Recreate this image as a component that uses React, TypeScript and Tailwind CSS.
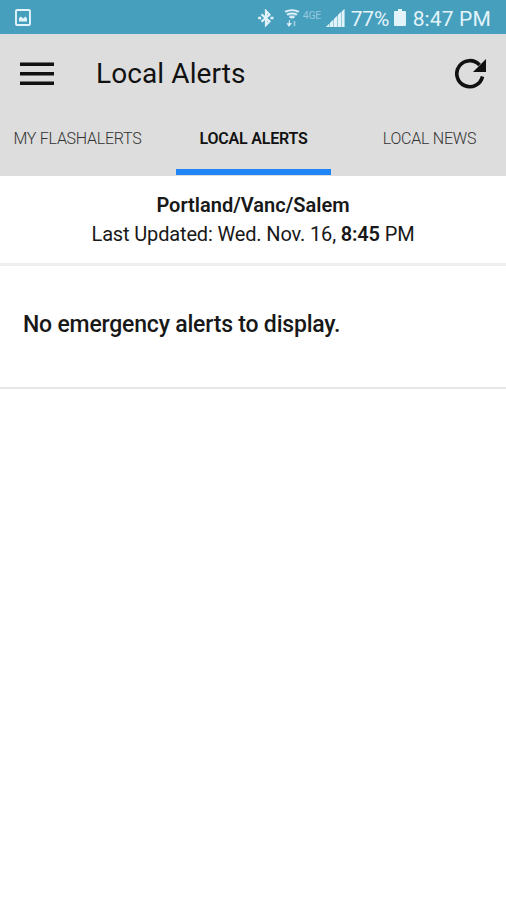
import clsx from 'clsx'

const TABS = [
  { id: 'mine',  label: 'MY FLASHALERTS', tracking: 'tracking-[-0.26px]' },
  { id: 'local', label: 'LOCAL ALERTS',   tracking: 'tracking-[-0.2px]' },
  { id: 'news',  label: 'LOCAL NEWS',     tracking: 'tracking-[-0.24px]' },
]

function StatusBar() {
  return (
    <div className="flex h-[34px] items-center bg-[#479fbe] px-[15px] pt-px text-[#e3f3fa]">
      <svg width="16" height="17" viewBox="0 0 16 17" fill="none">
        <rect x="1" y="1" width="14" height="15" rx="1" stroke="currentColor" strokeWidth="1.9" />
        <path d="M4 12.5V9l2-1.500 2 2 2.5-2 1.500 2v3z" fill="currentColor" />
      </svg>
      <svg width="18" height="18" viewBox="0 0 18 18" className="ml-[226px]" fill="none" stroke="currentColor" strokeWidth="2.2">
        <path d="M4.5 5.2l8 7.2L9 16V2l3.5 3.6-8 7.2" />
        <path d="M1.2 9h3M13.5 9h3" strokeWidth="2.6" />
      </svg>
      <svg width="16" height="18" viewBox="0 0 16 18" className="ml-[9px]" fill="none" stroke="currentColor">
        <path d="M1 2.800q7-3.500 14 0M3 5.800q5-3 10 0M5.500 8.600q2.500-1.600 5 0" strokeWidth="1.8" />
        <path d="M2 3.500L8 11l6-7.500z" fill="currentColor" fillOpacity=".35" stroke="none" />
        <path d="M5.500 11v3.500H7.500L5 17.500 3 14.500H5z" fill="currentColor" strokeWidth=".6" />
        <path d="M10.500 12v5" strokeOpacity=".6" strokeWidth="1.6" />
      </svg>
      <span className="-mt-[3px] ml-[3px] w-[20px] text-[10.5px] leading-none tracking-[-0.3px] whitespace-nowrap text-[#94c8dd]">4GE</span>
      <svg width="19" height="18" viewBox="0 0 19 18" className="ml-[3px]" fill="currentColor">
        <path d="M0 18L18.500 0v18z" fillOpacity=".5" />
        <path d="M0 18l3-3v3zM4 14l3-3v7H4zM8 10l3-3v11H8zM12 6l3-3v15h-3zM16 2.500L18.500 0v18H16z" />
      </svg>
      <span className="mt-[3px] ml-[6px] w-[39px] text-[21px] leading-none tracking-[-0.2px]">77%</span>
      <svg width="12" height="17" viewBox="0 0 12 17" className="ml-[4px]" fill="currentColor">
        <path d="M4 0h4v2h3.200q.8 0 .8.800V16q0 1-1 1H1q-1 0-1-1V2.800Q0 2 .8 2H4z" />
      </svg>
      <span className="mt-[3px] ml-[7px] text-[21px] leading-none tracking-[0.15px] whitespace-nowrap">8:47 PM</span>
    </div>
  )
}

export default function App() {
  return (
    <div className="min-h-[900px] w-[506px] overflow-hidden bg-white font-['Roboto',sans-serif] text-[#181818]">
      <StatusBar />

      <header className="h-[142px] bg-[#dddddd]">
        <div className="flex h-[79px] items-center pr-[19px] pl-5">
          <button aria-label="Menu">
            <svg width="34" height="24" viewBox="0 0 34 24" stroke="#111" strokeWidth="3.6" className="block">
              <path d="M0 2.300h34M0 11.800h34M0 21.200h34" />
            </svg>
          </button>
          <h1 className="ml-[42px] text-[28px] tracking-[0.1px] text-[#111]">Local Alerts</h1>
          <button aria-label="Refresh" className="ml-auto">
            <svg width="32" height="32" viewBox="0 0 32 32" fill="none">
              <path d="M27.500 18.500A13 13 0 1 1 24.500 7" stroke="#111" strokeWidth="3.600" />
              <path d="M31 1v13H18z" fill="#111" />
            </svg>
          </button>
        </div>

        <nav className="flex gap-[21px]">
          {TABS.map(t => (
            <button
              key={t.id}
              className={clsx(
                'flex h-[62px] w-[155px] shrink-0 justify-center border-b-[6px] pt-[14px] text-[16px] leading-6 whitespace-nowrap',
                t.id === 'local' ? 'border-[#2186f5] font-semibold text-[#111]' : 'border-transparent font-light text-[#333]',
                t.tracking,
              )}
            >
              {t.label}
            </button>
          ))}
        </nav>
      </header>

      {/* region and last refresh */}
      <section className="h-[90px] border-b-[3px] border-[#eeeeee] pt-[14px] text-center text-[20px] leading-[30px]">
        <p className="font-semibold">Portland/Vanc/Salem</p>
        <p className="-mt-px tracking-[-0.15px]">Last Updated: Wed. Nov. 16, <b className="font-semibold">8:45</b> PM</p>
      </section>

      <section className="h-[123px] border-b-2 border-[#e8e8e8] pt-[43px] pl-[23px]">
        <p className="text-[23px] leading-[32px] font-medium tracking-[-0.2px]">No emergency alerts to display.</p>
      </section>
    </div>
  )
}
